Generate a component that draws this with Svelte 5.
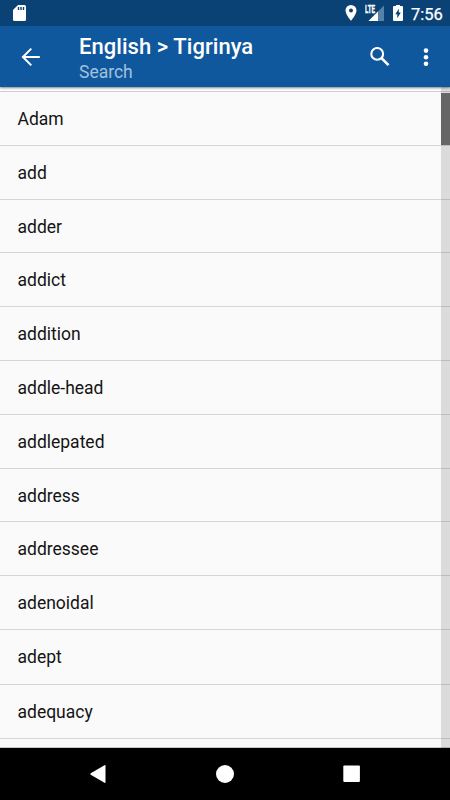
<script lang="ts">
  const title = 'English > Tigrinya';
  const subtitle = 'Search';

  const words: string[] = [
    'Adam',
    'add',
    'adder',
    'addict',
    'addition',
    'addle-head',
    'addlepated',
    'address',
    'addressee',
    'adenoidal',
    'adept',
    'adequacy'
  ];
</script>

<div class="screen">
  <div class="status-bar">
    <svg class="sd-card" width="14" height="18" viewBox="0 0 14 18">
      <path d="M5 1h6.5a1.5 1.5 0 0 1 1.5 1.5v13a1.5 1.5 0 0 1-1.5 1.5h-10a1.5 1.5 0 0 1-1.5-1.5V6z" fill="#fff" />
      <path d="M5.5 3v3M8 3v3M10.5 3v3" stroke="#0a4275" stroke-width="1.4" />
    </svg>

    <div class="status-icons">
      <svg class="location" width="12" height="17" viewBox="0 0 12 17">
        <path
          d="M6 1A5.5 5.5 0 0 0 .5 6.5C.5 10.600 6 16.800 6 16.800s5.500-6.200 5.500-10.300A5.5 5.5 0 0 0 6 1zm0 7.500a2 2 0 1 1 0-4 2 2 0 0 1 0 4z"
          fill="#fff"
        />
      </svg>

      <svg class="signal" width="20" height="18" viewBox="0 0 20 18">
        <path d="M19 1.500V17H3.500z" fill="#5682aa" />
        <path d="M13 7.500V17H3.500z" fill="#fff" />
        <path d="M0 0h11v9.500H0z" fill="#0a4275" />
        <text x="0" y="8.800" textLength="10" lengthAdjust="spacingAndGlyphs">LTE</text>
      </svg>

      <svg class="battery" width="10" height="17" viewBox="0 0 10 17">
        <path d="M3 1h4v1h2a1 1 0 0 1 1 1v13a1 1 0 0 1-1 1H1a1 1 0 0 1-1-1V3a1 1 0 0 1 1-1h2z" fill="#fff" />
        <path d="M5.800 4.800 2.300 10.300h2V14.300l3.500-5.700h-2z" fill="#0a4275" />
      </svg>

      <span class="clock">7:56</span>
    </div>
  </div>

  <header class="toolbar">
    <svg class="back" width="20" height="20" viewBox="0 0 20 20">
      <path d="M10.300 1.600 1.900 10l8.400 8.400M2.300 10H18.800" fill="none" stroke="#fff" stroke-width="2" />
    </svg>

    <div class="titles">
      <h1>{title}</h1>
      <p>{subtitle}</p>
    </div>

    <svg class="search" width="20" height="20" viewBox="0 0 20 20">
      <circle cx="7.200" cy="6.900" r="5.900" fill="none" stroke="#fff" stroke-width="2.100" />
      <path d="M11.500 11.200l7 7" stroke="#fff" stroke-width="2.600" />
    </svg>

    <svg class="more" width="6" height="20" viewBox="0 0 6 20">
      <circle cx="3" cy="3.600" r="2.300" fill="#fff" />
      <circle cx="3" cy="10.200" r="2.300" fill="#fff" />
      <circle cx="3" cy="16.800" r="2.300" fill="#fff" />
    </svg>
  </header>

  <main>
    <ul>
      {#each words as word}
        <li>{word}</li>
      {/each}
    </ul>
    <div class="scrollbar">
      <div class="thumb"></div>
    </div>
  </main>

  <nav>
    <svg width="20" height="20" viewBox="0 0 20 20">
      <path d="M2.700 9.300 16.500 1.200q1-.4 1 .6v16.400q0 1-1 .6L2.700 10.700q-.8-.7 0-1.400z" fill="#fff" />
    </svg>
    <svg width="20" height="20" viewBox="0 0 20 20">
      <circle cx="10" cy="10" r="9" fill="#fff" />
    </svg>
    <svg width="20" height="20" viewBox="0 0 20 20">
      <rect x="2.300" y="1.500" width="16.600" height="16.600" rx="1" fill="#fff" />
    </svg>
  </nav>
</div>

<style>
  .screen {
    display: flex;
    flex-direction: column;
    width: 450px;
    height: 800px;
    overflow: hidden;
    background: #fafafa;
    font-family: Roboto, sans-serif;
  }

  svg {
    display: block;
    flex: none;
  }

  .status-bar {
    display: flex;
    flex: none;
    justify-content: space-between;
    box-sizing: border-box;
    height: 26px;
    padding: 4px 9px 0 13px;
    background: #0a4275;
  }

  .status-icons {
    display: flex;
  }

  .location,
  .signal,
  .battery {
    margin-right: 8px;
  }

  .signal text {
    fill: #fff;
    stroke: #fff;
    stroke-width: 0.3px;
    font-size: 10.5px;
    font-weight: 700;
  }

  .clock {
    width: 30px;
    color: #fff;
    font-size: 16.5px;
    font-weight: 400;
    line-height: 21px;
    -webkit-text-stroke: 0.25px #fff;
  }

  .toolbar {
    z-index: 1;
    display: flex;
    flex: none;
    align-items: center;
    box-sizing: border-box;
    height: 61px;
    padding: 0 21px;
    background: #10589e;
    box-shadow: 0 1px 2px rgba(0, 0, 0, 0.45);
  }

  .titles {
    flex: 1;
    margin-left: 38px;
    padding-top: 6px;
  }

  h1,
  p {
    margin: 0;
    font-weight: 400;
  }

  h1 {
    color: #fff;
    font-size: 22px;
    font-weight: 500;
    letter-spacing: 0.05px;
    line-height: 25px;
  }

  p {
    color: #a3c0dc;
    font-size: 17.5px;
    line-height: 27px;
  }

  .search {
    margin-right: 33px;
  }

  main {
    display: flex;
    flex: 1;
    min-height: 0;
    background: #fafafa;
  }

  /* dividers run on under the scrollbar */
  ul {
    flex: 1;
    box-sizing: border-box;
    margin: 4px -9px 0 0;
    padding: 0;
    border-top: 1px solid #d0d0d0;
    list-style: none;
  }

  li {
    box-sizing: border-box;
    height: 53.8px;
    padding-left: 17.5px;
    border-bottom: 1px solid #d6d6d6;
    color: #141414;
    font-size: 17.5px;
    line-height: 55px;
  }

  li:nth-child(11) {
    height: 55px;
  }

  .scrollbar {
    box-sizing: border-box;
    width: 9px;
    padding-top: 6px;
    background: rgba(0, 0, 0, 0.12);
  }

  .thumb {
    height: 52px;
    background: #666;
  }

  nav {
    z-index: 1;
    display: flex;
    flex: none;
    justify-content: space-between;
    box-sizing: border-box;
    height: 52px;
    padding: 16px 89px 0 88px;
    background: #000;
    box-shadow: 0 -1px 0 rgba(0, 0, 0, 0.2);
  }
</style>
